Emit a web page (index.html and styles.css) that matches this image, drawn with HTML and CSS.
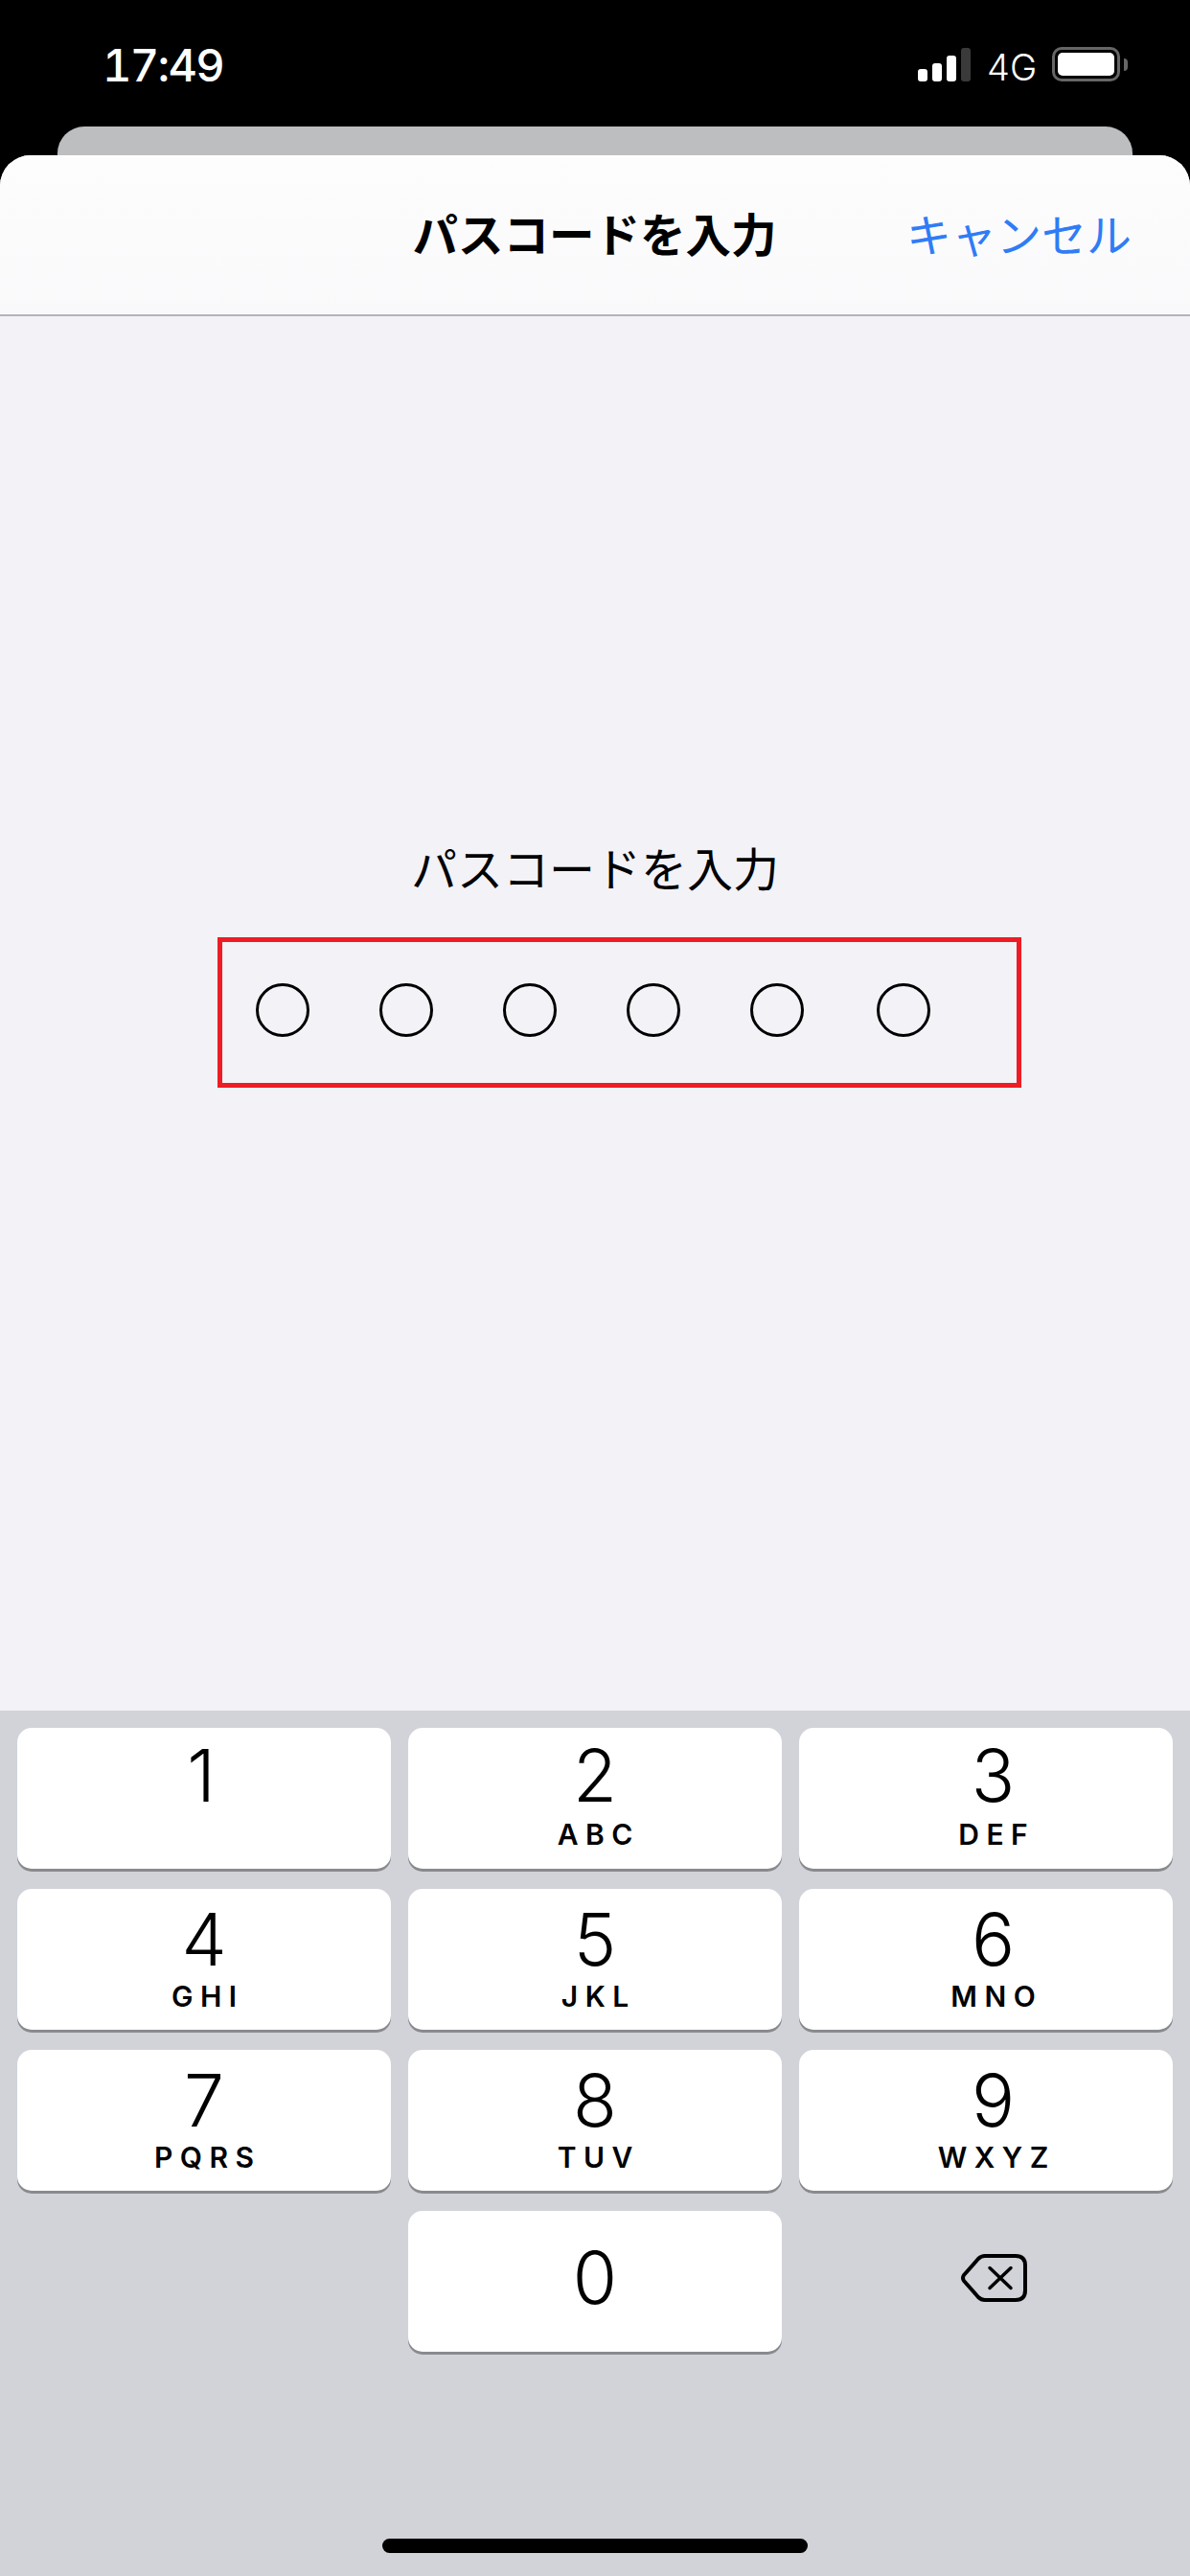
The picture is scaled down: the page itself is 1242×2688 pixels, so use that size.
FILE: index.html
```html
<!DOCTYPE html>
<html lang="ja">
<head>
<meta charset="utf-8">
<title>パスコードを入力</title>
<link rel="stylesheet" href="styles.css">
</head>
<body>
<div class="page">
  <header class="status">
    <span class="time">17:49</span>
    <div class="status-right">
      <div class="signal"><i class="bar b1"></i><i class="bar b2"></i><i class="bar b3"></i><i class="bar b4"></i></div>
      <span class="net">4G</span>
      <div class="battery"><div class="battery-body"><div class="battery-fill"></div></div><div class="battery-nub"></div></div>
    </div>
  </header>
  <div class="back-sheet"></div>
  <main class="sheet">
    <nav class="nav">
      <h1 class="nav-title">パスコードを入力</h1>
      <a class="cancel">キャンセル</a>
    </nav>
    <section class="content">
      <p class="prompt">パスコードを入力</p>
      <div class="code-box">
        <span class="dot"></span><span class="dot"></span><span class="dot"></span><span class="dot"></span><span class="dot"></span><span class="dot last"></span>
      </div>
    </section>
    <section class="keyboard">
      <div class="keys">
        <div class="key key-top key-one"><span class="digit">1</span></div>
        <div class="key key-top"><span class="digit">2</span><span class="letters">ABC</span></div>
        <div class="key key-top key-right"><span class="digit">3</span><span class="letters">DEF</span></div>
        <div class="key"><span class="digit">4</span><span class="letters">GHI</span></div>
        <div class="key"><span class="digit">5</span><span class="letters">JKL</span></div>
        <div class="key key-right"><span class="digit">6</span><span class="letters">MNO</span></div>
        <div class="key"><span class="digit">7</span><span class="letters">PQRS</span></div>
        <div class="key"><span class="digit">8</span><span class="letters">TUV</span></div>
        <div class="key key-right"><span class="digit">9</span><span class="letters">WXYZ</span></div>
        <div class="blank"></div>
        <div class="key key-zero"><span class="digit">0</span></div>
        <div class="delete">
          <svg class="delete-icon" width="70" height="50" viewBox="0 0 70 50" fill="none" stroke="#000" stroke-width="4" stroke-linecap="round" stroke-linejoin="round">
            <path d="M26 2H58Q68 2 68 12V38Q68 48 58 48H26Q22 48 19 45L4 28Q2 25 4 22L19 5Q22 2 26 2Z"/>
            <path stroke-width="3.5" d="M31 14.5L53 35.5M53 14.5L31 35.5"/>
          </svg>
        </div>
      </div>
      <div class="home-bar"></div>
    </section>
  </main>
</div>
</body>
</html>
```
FILE: styles.css
```css
* { box-sizing: border-box; }
html, body { margin: 0; padding: 0; background: #000; }
.page {
  width: 1242px;
  height: 2688px;
  display: flex;
  flex-direction: column;
  overflow: hidden;
  background: #000;
  font-family: Inter, "Liberation Sans", "Noto Sans CJK JP", sans-serif;
}
.status {
  height: 132px;
  flex: none;
  display: flex;
  justify-content: space-between;
  align-items: flex-start;
  padding: 0 65px 0 107px;
  color: #fff;
}
.time {
  font-size: 47px;
  font-weight: 500;
  line-height: 56px;
  margin-top: 40px;
  font-variant-numeric: tabular-nums;
  letter-spacing: -1.7px;
}
.status-right {
  display: flex;
  align-items: flex-start;
  margin-top: 49px;
}
.signal {
  display: flex;
  align-items: flex-end;
  gap: 5px;
  height: 36px;
}
.bar { display: block; width: 10px; border-radius: 3px; background: #fff; }
.b1 { height: 13px; }
.b2 { height: 19px; }
.b3 { height: 27px; }
.b4 { height: 35px; background: #3a3a3a; }
.net {
  font-size: 38px;
  font-weight: 350;
  line-height: 44px;
  margin-left: 17px;
  margin-top: -1px;
  width: 68px;
}
.battery { display: flex; align-items: center; height: 36px; }
.battery-body {
  width: 71px;
  height: 36px;
  border: 3px solid #666;
  border-radius: 10px;
  padding: 3px;
}
.battery-fill { width: 100%; height: 100%; background: #fff; border-radius: 5px; }
.battery-nub {
  width: 4px;
  height: 13px;
  margin-left: 4px;
  background: #666;
  border-radius: 0 4px 4px 0;
}
.back-sheet {
  height: 30px;
  flex: none;
  margin: 0 60px;
  background: #bdbebf;
  border-radius: 28px 28px 0 0;
}
.sheet {
  flex: 1;
  display: flex;
  flex-direction: column;
  background: #f2f2f7;
  border-radius: 32px 32px 0 0;
  overflow: hidden;
}
.nav {
  height: 168px;
  flex: none;
  display: grid;
  grid-template-columns: 1fr auto 1fr;
  align-items: center;
  padding-bottom: 4px;
  background: linear-gradient(#fdfdfd, #f9f9fb);
  border-bottom: 2px solid #b4b4b6;
  font-family: "Noto Sans CJK JP", sans-serif;
  font-size: 47px;
}
.nav-title {
  grid-column: 2;
  margin: 0 1px 0 0;
  font-size: 47.5px;
  font-weight: 700;
  color: #000;
  line-height: 68px;
}
.cancel {
  justify-self: end;
  padding-right: 61px;
  color: #2f7cf6;
  line-height: 68px;
  white-space: nowrap;
}
.content {
  flex: 1;
  display: flex;
  flex-direction: column;
}
.prompt {
  margin: 540px 0 0;
  text-align: center;
  font-family: "Noto Sans CJK JP", sans-serif;
  font-size: 48px;
  font-weight: 400;
  line-height: 68px;
  color: #000;
}
.code-box {
  width: 839px;
  height: 157px;
  margin: 40px 0 0 227px;
  border: 5px solid #ee1c25;
  display: flex;
  align-items: center;
  gap: 73px;
  padding: 0 0 6px 35px;
}
.dot {
  width: 56px;
  height: 56px;
  flex: none;
  border: 3px solid #000;
  border-radius: 50%;
}
.dot.last { margin-left: 3px; }
.keyboard {
  height: 903px;
  flex: none;
  display: flex;
  flex-direction: column;
  background: #d1d3d9;
}
.keys {
  display: grid;
  grid-template-columns: repeat(3, 390px);
  grid-auto-rows: 147px;
  column-gap: 18px;
  row-gap: 21px;
  padding: 18px 18px 0;
}
.key {
  display: flex;
  flex-direction: column;
  align-items: center;
  padding-top: 16px;
  background: #fff;
  border-radius: 15px;
  box-shadow: 0 3px 0 #898a8d;
  color: #000;
}
.digit {
  font-size: 75px;
  font-weight: 350;
  line-height: 74px;
}
.letters {
  font-size: 30px;
  font-weight: 600;
  line-height: 36px;
  letter-spacing: 7.5px;
  margin-right: -7.5px;
  margin-top: 4px;
}
.key-top { padding-top: 13px; }
.key-top .letters { margin-top: 6px; }
.key-one { padding-right: 6px; }
.key-right { padding-left: 15px; }
.key-zero { padding-top: 33px; }
.delete {
  display: flex;
  align-items: flex-start;
  justify-content: center;
  padding: 45px 0 0 16px;
}
.delete-icon { display: block; }
.home-bar {
  width: 444px;
  height: 15px;
  margin: auto 0 24px 399px;
  background: #000;
  border-radius: 8px;
}
```
